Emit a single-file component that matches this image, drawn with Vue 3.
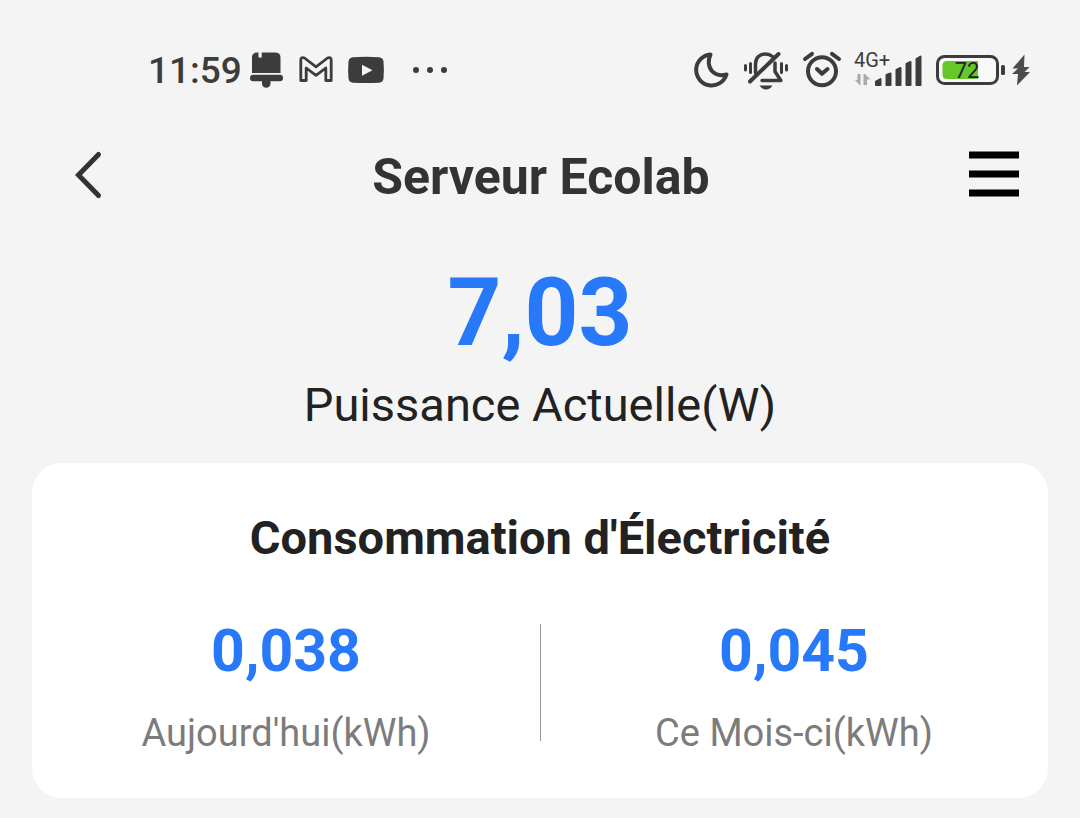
<script setup>
const reading = { value: '7,03', label: 'Puissance Actuelle(W)' }
const stats = [
  { value: '0,038', label: "Aujourd'hui(kWh)" },
  { value: '0,045', label: 'Ce Mois-ci(kWh)' },
]
</script>

<template>
  <div class="screen">
    <div class="status">
      <div class="status-left">
        <span class="time">11:59</span>
        <svg width="34" height="40" viewBox="0 0 34 40" fill="#3c3c3c" aria-hidden="true">
          <path d="M6 2.5H8.500V7.500H11.700V2.500H26Q30.500 3 30.500 7.500V23H2V7Q2 3.500 6 2.500Z" />
          <rect x="0" y="24.700" width="33" height="6.600" rx="3.200" />
          <path d="M12 31H20.500V33.500A4.200 4.200 0 0 1 12 33.500Z" />
        </svg>
        <svg width="34" height="40" viewBox="0 0 34 40" fill="none" stroke="#3c3c3c" stroke-width="2.800" stroke-linejoin="round" aria-hidden="true">
          <path d="M1.800 30.500V10Q2 6.500 5.500 8L17 16.800L28.500 8Q32 6.500 32.200 10V30.500H26.800V18L17 25.300L7.200 18V30.500Z" />
        </svg>
        <svg width="36" height="40" viewBox="0 0 36 40" aria-hidden="true">
          <path d="M5 7.300Q18 6.300 31 7.300Q35 7.600 35.500 11.500Q36.300 20 35.500 28.500Q35 32.400 31 32.700Q18 33.500 5 32.700Q1 32.400.5 28.500Q-.3 20 .5 11.500Q1 7.600 5 7.300Z" fill="#3c3c3c" />
          <path d="M14 14.800L24.500 20.200L14 25.700Z" fill="#f4f4f4" />
        </svg>
        <svg class="more" width="36" height="40" viewBox="0 0 36 40" fill="#3c3c3c" aria-hidden="true">
          <circle cx="4" cy="20" r="3" /><circle cx="18" cy="20" r="3" /><circle cx="32" cy="20" r="3" />
        </svg>
      </div>
      <div class="status-right">
        <svg width="36" height="40" viewBox="0 0 36 40" fill="none" stroke="#3c3c3c" stroke-width="4" stroke-linejoin="round" aria-hidden="true">
          <path d="M16.500 4.500A15.500 15.500 0 1 0 32.500 24.500Q23 27 17.500 20.500Q12.500 13.500 16.500 4.500Z" />
        </svg>
        <svg width="44" height="40" viewBox="0 0 44 40" fill="none" stroke="#3c3c3c" stroke-width="3" stroke-linecap="round" aria-hidden="true">
          <path d="M1.500 15.500V20M6.500 13.500V22.500M37.500 13.500V22.500M42.500 15.500V20" />
          <path d="M11.500 23V14C11.500 7.500 16 4 21.500 4Q25.500 4 28.500 6.500" stroke-width="3.500" />
          <path d="M31 13V21.500L36.800 30.500H18" stroke-width="3.500" stroke-linejoin="round" />
          <path d="M6 31.500L34.500 4" stroke-width="4" />
          <path d="M15.500 35.500H28.500Q26 39.500 22 39.500T15.500 35.500Z" fill="#3c3c3c" stroke="none" />
        </svg>
        <svg width="38" height="40" viewBox="0 0 38 40" fill="none" stroke="#3c3c3c" stroke-width="4" stroke-linecap="round" aria-hidden="true">
          <circle cx="20" cy="21.300" r="14" />
          <path d="M3 9L10 3.800M30 3.800L37 9" />
          <path d="M15 19L20 23.800L25.500 19" stroke-linejoin="round" />
        </svg>
        <svg class="signal" width="68" height="40" viewBox="0 0 68 40" role="img" aria-label="4G+">
          <text x="0" y="17" fill="#3c3c3c">4G+</text>
          <path d="M6.500 24V35H5.500L1 30H3.500V24ZM9.500 35V24H11L16.500 29.500H13V35Z" fill="#aaa" />
          <path d="M22 31.500L26.500 29V35H22ZM32.500 25L36.500 23.500V35H32.500ZM42.500 20L46.500 18V35H42.500ZM52.500 14L56.500 12V35H52.500ZM62.500 9L66.500 6.500V35H62.500Z" fill="#3c3c3c" stroke="#3c3c3c" stroke-width="2" stroke-linejoin="round" />
        </svg>
        <svg class="battery" width="94" height="40" viewBox="0 0 94 40" role="img" aria-label="72 %">
          <rect x="1.500" y="6.500" width="60" height="27" rx="7" fill="#f8f8f8" stroke="#3c3c3c" stroke-width="3" />
          <path d="M11 11H42V29H11Q6.500 29 6.500 24.500V15.500Q6.500 11 11 11Z" fill="#65c728" />
          <text x="31" y="28" text-anchor="middle" fill="#222">72</text>
          <rect x="65" y="15" width="4" height="10" rx="1.500" fill="#3c3c3c" />
          <path d="M88.500 4.500L76.500 18.500H82L76 24H82L81 35.500L94 22H88.500L93.500 17H88Z" fill="#4c4c4c" />
        </svg>
      </div>
    </div>

    <header class="header">
      <button class="icon-button" type="button" aria-label="Retour">
        <svg width="30" height="52" viewBox="0 0 30 52" fill="none" stroke="#333" stroke-width="5" stroke-linecap="round" stroke-linejoin="miter">
          <path d="M24.500 4.500L4.500 25L24.500 45.500" />
        </svg>
      </button>
      <h1>Serveur Ecolab</h1>
      <button class="icon-button menu" type="button" aria-label="Menu">
        <svg width="50" height="50" viewBox="0 0 50 50" fill="#000">
          <rect y="0.500" width="50" height="7" /><rect y="19.500" width="50" height="7" /><rect y="38.500" width="50" height="7" />
        </svg>
      </button>
    </header>

    <main>
      <section class="current">
        <div class="current-value">{{ reading.value }}</div>
        <div class="current-label">{{ reading.label }}</div>
      </section>

      <section class="card">
        <h2>Consommation d'Électricité</h2>
        <div class="stats">
          <div v-for="stat in stats" :key="stat.label" class="stat">
            <div class="stat-value">{{ stat.value }}</div>
            <div class="stat-label">{{ stat.label }}</div>
          </div>
        </div>
      </section>
    </main>
  </div>
</template>

<style>
body {
  margin: 0;
  background: #f4f4f4;
}
</style>

<style scoped>
.screen {
  min-height: 100vh;
  box-sizing: border-box;
  padding: 50px 32px 20px;
  background: #f4f4f4;
  color: #222;
  font-family: Roboto, "Liberation Sans", sans-serif;
}
svg {
  display: block;
  flex: none;
  overflow: visible;
}
.status {
  display: flex;
  justify-content: space-between;
  height: 40px;
  padding: 0 18px 0 116px;
}
.status-left,
.status-right {
  display: flex;
  align-items: center;
}
.status-left {
  gap: 15px;
}
.status-right {
  gap: 14px;
}
.time {
  margin-right: -7px;
  padding-top: 2px;
  font-size: 37px;
  font-weight: 500;
  line-height: 40px;
  color: #3c3c3c;
}
.more {
  margin-left: 13px;
}
.signal {
  font-size: 20px;
}
.battery {
  font-size: 22px;
}
.header {
  display: grid;
  grid-template-columns: 60px 1fr 100px;
  align-items: center;
  height: 72px;
  margin-top: 50px;
  padding-left: 42px;
}
h1,
h2 {
  margin: 0;
  text-align: center;
  font-weight: 700;
}
h1 {
  padding-top: 2px;
  font-size: 50px;
  line-height: 70px;
  color: #333;
}
.icon-button {
  display: flex;
  padding: 0;
  border: 0;
  background: none;
}
.menu {
  justify-self: end;
  margin-right: 29px;
}
.current {
  padding-top: 45px;
  text-align: center;
}
.current-value {
  font-size: 94px;
  font-weight: 700;
  line-height: 112px;
  color: #2878fa;
}
.current-label {
  font-size: 47px;
  line-height: 72px;
}
.card {
  margin-top: 22px;
  padding: 40px 0 39px;
  border-radius: 30px;
  background: #fff;
}
h2 {
  font-size: 47px;
  line-height: 70px;
}
.stats {
  display: flex;
  margin-top: 40px;
  text-align: center;
}
.stat {
  flex: 1;
  position: relative;
}
.stat + .stat::before {
  content: "";
  position: absolute;
  top: 11px;
  bottom: 18px;
  left: 0;
  width: 1px;
  background: #999;
}
.stat-value {
  font-size: 59px;
  font-weight: 700;
  line-height: 76px;
  color: #2878fa;
}
.stat-label {
  margin-top: 18px;
  font-size: 38px;
  line-height: 52px;
  color: #7c7c7c;
}
</style>
